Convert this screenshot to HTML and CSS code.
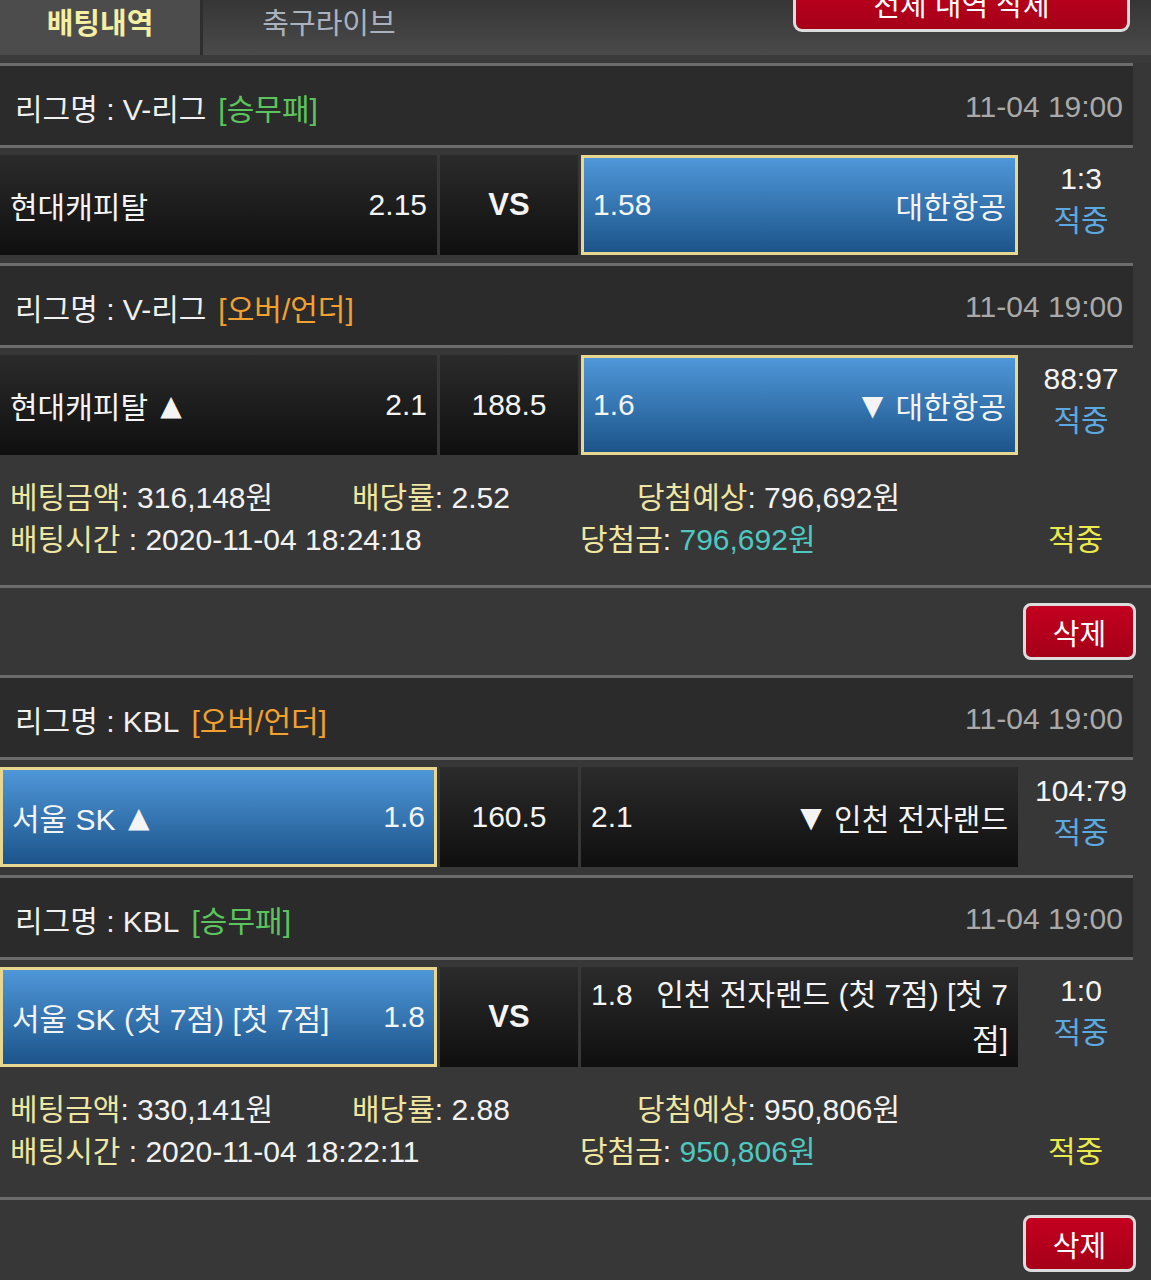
FILE: index.html
```html
<!DOCTYPE html>
<html lang="ko">
<head>
<meta charset="utf-8">
<title>배팅내역</title>
<link rel="stylesheet" href="styles.css">
</head>
<body>
<div class="page">
  <div class="topbar">
    <div class="tab active">배팅내역</div>
    <div class="tab live">축구라이브</div>
    <button class="btn-red btn-all">전체 내역 삭제</button>
  </div>
  <div class="topgap"></div>

  <section class="bet">
    <div class="game">
      <div class="league"><span class="lname">리그명 : V-리그</span><span class="type t-green">[승무패]</span><span class="date">11-04 19:00</span></div>
      <div class="row">
        <div class="cell side"><span class="team">현대캐피탈</span><span class="odds">2.15</span></div>
        <div class="cell mid vs">VS</div>
        <div class="cell side sel"><span class="odds">1.58</span><span class="team">대한항공</span></div>
        <div class="result"><div class="score">1:3</div><div class="hit">적중</div></div>
      </div>
    </div>
    <div class="game">
      <div class="league"><span class="lname">리그명 : V-리그</span><span class="type t-orange">[오버/언더]</span><span class="date">11-04 19:00</span></div>
      <div class="row">
        <div class="cell side"><span class="team">현대캐피탈 <span class="arw up">▲</span></span><span class="odds">2.1</span></div>
        <div class="cell mid">188.5</div>
        <div class="cell side sel"><span class="odds">1.6</span><span class="team"><span class="arw down">▼</span> 대한항공</span></div>
        <div class="result"><div class="score">88:97</div><div class="hit">적중</div></div>
      </div>
    </div>
    <div class="summary">
      <div class="line">
        <span class="c1"><em>베팅금액</em>: 316,148원</span>
        <span class="c2"><em>배당률</em>: 2.52</span>
        <span class="c3"><em>당첨예상</em>: 796,692원</span>
      </div>
      <div class="line">
        <span class="d1"><em>배팅시간</em> : 2020-11-04 18:24:18</span>
        <span class="d2"><em>당첨금</em>: <span class="amt">796,692원</span></span>
        <span class="d3 status">적중</span>
      </div>
    </div>
    <div class="actions"><button class="btn-red btn-del">삭제</button></div>
  </section>

  <section class="bet">
    <div class="game">
      <div class="league"><span class="lname">리그명 : KBL</span><span class="type t-orange">[오버/언더]</span><span class="date">11-04 19:00</span></div>
      <div class="row">
        <div class="cell side sel"><span class="team">서울 SK <span class="arw up">▲</span></span><span class="odds">1.6</span></div>
        <div class="cell mid">160.5</div>
        <div class="cell side"><span class="odds">2.1</span><span class="team"><span class="arw down">▼</span> 인천 전자랜드</span></div>
        <div class="result"><div class="score">104:79</div><div class="hit">적중</div></div>
      </div>
    </div>
    <div class="game">
      <div class="league"><span class="lname">리그명 : KBL</span><span class="type t-green">[승무패]</span><span class="date">11-04 19:00</span></div>
      <div class="row">
        <div class="cell side sel"><span class="team">서울 SK (첫 7점) [첫 7점]</span><span class="odds">1.8</span></div>
        <div class="cell mid vs">VS</div>
        <div class="cell side"><div class="inner"><span class="odds">1.8</span><span class="team wrap">인천 전자랜드 (첫 7점) [첫 7점]</span></div></div>
        <div class="result"><div class="score">1:0</div><div class="hit">적중</div></div>
      </div>
    </div>
    <div class="summary">
      <div class="line">
        <span class="c1"><em>베팅금액</em>: 330,141원</span>
        <span class="c2"><em>배당률</em>: 2.88</span>
        <span class="c3"><em>당첨예상</em>: 950,806원</span>
      </div>
      <div class="line">
        <span class="d1"><em>배팅시간</em> : 2020-11-04 18:22:11</span>
        <span class="d2"><em>당첨금</em>: <span class="amt">950,806원</span></span>
        <span class="d3 status">적중</span>
      </div>
    </div>
    <div class="actions"><button class="btn-red btn-del">삭제</button></div>
  </section>
</div>
</body>
</html>
```

FILE: styles.css
```css
* { box-sizing: border-box; }
html, body { margin: 0; padding: 0; }
body {
  width: 1151px;
  height: 1280px;
  overflow: hidden;
  background: #373737;
  color: #f2f2f2;
  font-family: "Liberation Sans", "Noto Sans CJK KR", sans-serif;
  font-size: 30px;
}
.page { margin-top: -26px; }

/* top bar */
.topbar {
  height: 81px;
  display: flex;
  background: linear-gradient(#2c2c2c, #4a4a4a);
}
.tab {
  display: flex;
  align-items: center;
  justify-content: center;
  padding-top: 12px;
  font-size: 29px;
  font-family: "Noto Sans CJK KR", sans-serif;
}
.tab.active {
  width: 203px;
  background: #4c4c4c;
  border-right: 3px solid #2e2e2e;
  color: #f4efa2;
  font-weight: bold;
}
.tab.live { width: 252px; color: #aab2c0; }
.btn-red {
  font-family: "Noto Sans CJK KR", sans-serif;
  color: #fff;
  background: linear-gradient(#c3001f, #a50018);
  border: 3px solid #dcdcdc;
  border-radius: 9px;
  padding: 0;
  cursor: pointer;
}
.btn-all {
  margin-left: auto;
  margin-right: 21px;
  width: 337px;
  height: 58px;
  font-size: 29px;
}
.topgap { height: 8px; background: #3a3a3a; }

/* games */
.game { width: 1133px; border-top: 3px solid #6c6c6c; }
.league {
  height: 82px;
  display: flex;
  align-items: center;
  padding: 3px 10px 0 15px;
  background: #2b2b2b;
  border-bottom: 3px solid #6c6c6c;
}
.lname { color: #f0f0f0; }
.type { margin-left: 12px; }
.t-green { color: #5cc45c; }
.t-orange { color: #f2a130; }
.date { margin-left: auto; color: #a9a9a9; }

.row {
  height: 115px;
  display: flex;
  gap: 3px;
  padding: 7px 0 8px;
}
.cell {
  height: 100px;
  display: flex;
  align-items: center;
  background: linear-gradient(#2b2b2b, #0f0f0f);
  color: #f4f4f4;
}
.side {
  width: 437px;
  padding: 0 10px;
  justify-content: space-between;
}
.side.sel {
  padding: 0 9px;
  background: linear-gradient(#4f97d9, #1c548a);
  border: 3px solid #e9d68f;
}
.arw {
  font-family: "DejaVu Sans", sans-serif;
  font-size: 28px;
  vertical-align: 3px;
}
.arw.up { margin-left: 4px; }
.arw.down { margin-right: 4px; }
.mid { width: 138px; justify-content: center; }
.vs { font-weight: bold; font-size: 31px; }
.inner {
  width: 100%;
  display: flex;
  align-items: baseline;
  line-height: 45px;
}
.wrap { flex: 1; text-align: right; margin-left: 20px; word-break: break-all; }

.result {
  width: 112px;
  padding: 0 0 10px 8px;
  display: flex;
  flex-direction: column;
  justify-content: center;
  align-items: center;
  line-height: 42px;
}
.score { color: #f4f4f4; }
.hit { color: #5ba9e2; }

/* summary */
.summary {
  padding: 14px 0 24px 10px;
  border-bottom: 3px solid #6c6c6c;
  line-height: 42px;
}
.line { display: flex; white-space: nowrap; }
.summary em { font-style: normal; color: #efe6a2; }
.c1 { width: 342px; }
.c2 { width: 285px; }
.d1 { width: 570px; }
.d2 { width: 468px; }
.amt { color: #4ec8c0; }
.status { color: #eaea4c; }

.actions {
  height: 87px;
  display: flex;
  justify-content: flex-end;
  align-items: center;
  padding-right: 15px;
}
.btn-del {
  width: 113px;
  height: 57px;
  font-size: 29px;
  border-radius: 8px;
}
```
